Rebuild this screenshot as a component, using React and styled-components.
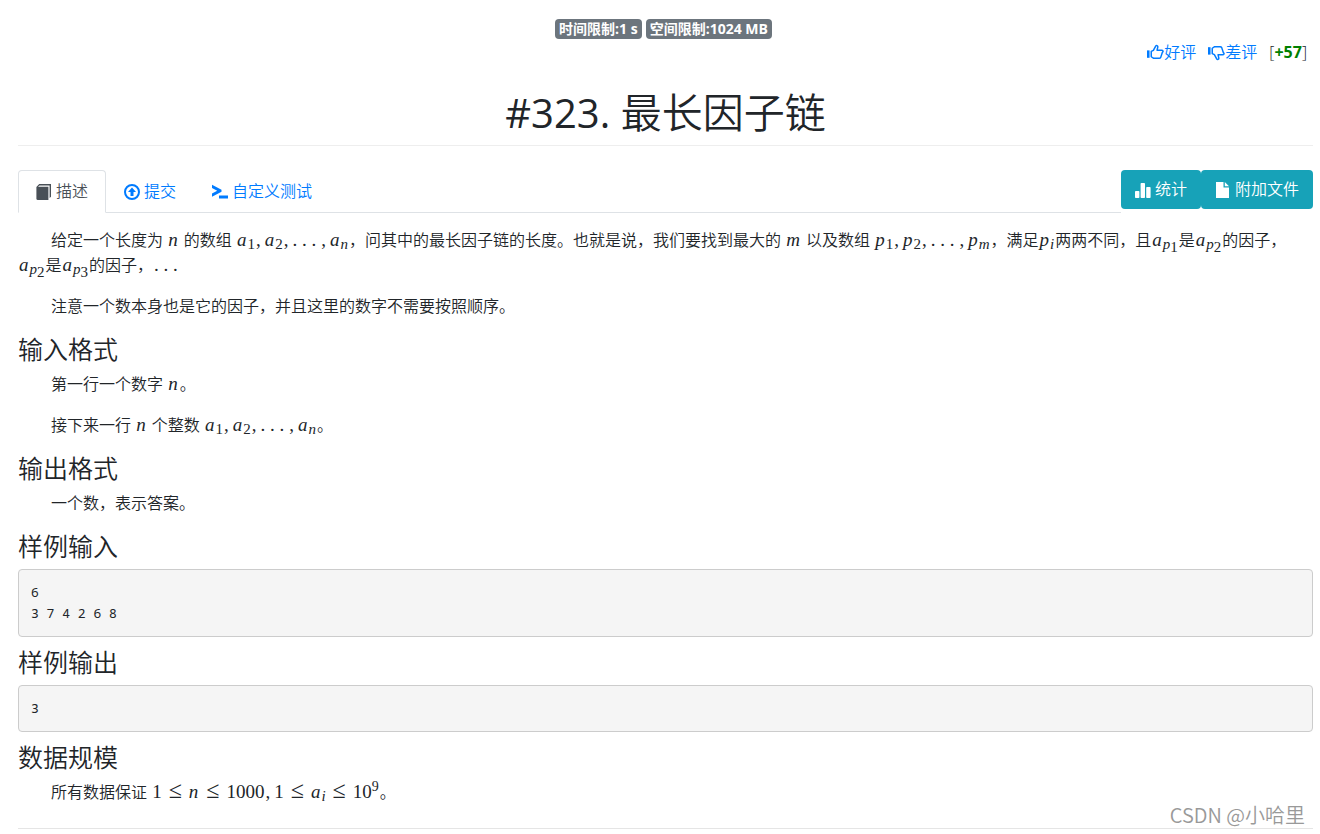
import styled, { createGlobalStyle, css } from "styled-components";

const GlobalStyle = createGlobalStyle`
  *,
  *::before,
  *::after {
    box-sizing: border-box;
  }

  body {
    margin: 0;
    background: #fff;
    color: #212529;
    font-family: "Open Sans", "Noto Sans CJK SC", sans-serif;
    font-size: 16px;
    font-weight: 350;
    line-height: 25px;
  }
`;

const Page = styled.main`
  position: relative;
  padding: 16px 7px 5px 18px;
`;

// Header
const Limits = styled.div`
  display: flex;
  justify-content: center;
  gap: 4px;
  padding: 3px 4px 1px 0;
`;

const Badge = styled.span`
  padding: 0 4px;
  border-radius: 4px;
  background: #6c757d;
  color: #fff;
  font-size: 14px;
  font-weight: 700;
  line-height: 20px;
`;

const Votes = styled.div`
  display: flex;
  justify-content: flex-end;
  align-items: center;
  gap: 12px;
  padding-right: 6px;
`;

const VoteLink = styled.a`
  display: inline-flex;
  align-items: center;
  color: #007bff;
  text-decoration: none;
`;

const Score = styled.strong`
  color: green;
  font-weight: 700;
`;

const Title = styled.h1`
  margin: 20px 0 24px;
  padding-bottom: 5px;
  border-bottom: 1px solid #eee;
  font-size: 41px;
  font-weight: 350;
  line-height: 54px;
  text-align: center;
`;

const ProblemId = styled.span`
  font-size: 40px;
  font-weight: 500;
`;

// Tabs and actions
const Toolbar = styled.div`
  display: flex;
  align-items: flex-start;
  margin-bottom: 15px;
`;

const Tabs = styled.nav`
  display: flex;
  flex: 1;
  height: 43px;
  border-bottom: 1px solid #dee2e6;
`;

const Tab = styled.a`
  display: flex;
  align-items: center;
  gap: 4px;
  height: 43px;
  padding: 0 17px;
  border: 1px solid transparent;
  border-radius: 4px 4px 0 0;
  color: #007bff;
  text-decoration: none;

  ${(props) =>
    props.$active &&
    css`
      border-color: #dee2e6 #dee2e6 #fff;
      background: #fff;
      color: #495057;
    `}
`;

const ActionButton = styled.button`
  display: flex;
  align-items: center;
  gap: 4px;
  height: 39px;
  padding: 0 14px;
  border: 0;
  border-radius: 4px;
  background: #17a2b8;
  color: #fff;
  font: inherit;
  cursor: pointer;
`;

// Problem statement
const Heading = styled.h3`
  margin: 0 0 9px;
  font-size: 25px;
  font-weight: 350;
  line-height: 28px;
`;

const Text = styled.p`
  margin: 0 0 16px;
  text-indent: 33px;
`;

const Sample = styled.pre`
  margin: 0 0 11px;
  padding: 12px;
  border: 1px solid #ccc;
  border-radius: 4px;
  background: #f5f5f5;
  font-family: "Noto Sans Mono", "DejaVu Sans Mono", monospace;
  font-size: 13px;
  font-weight: 400;
  line-height: 21px;
`;

const Divider = styled.hr`
  margin: 23px 0 0;
  border: 0;
  border-top: 1px solid #e5e5e5;
`;

const Watermark = styled.div`
  position: absolute;
  right: 15px;
  bottom: 6px;
  color: #999;
  font-family: "Noto Sans CJK SC", sans-serif;
  font-size: 20px;
  font-weight: 350;
  line-height: 26px;
`;

// Formulas
const Formula = styled.span`
  margin: 0 1px;
  font-family: "Liberation Serif", serif;
  font-size: 19px;
  font-weight: 400;
  line-height: 0;
  text-indent: 0;
  white-space: nowrap;
`;

const Var = styled.i`
  padding-right: 1px;
`;

const Sub = styled.sub`
  font-size: 15px;
  line-height: 0;
  vertical-align: -3px;
`;

const Sup = styled.sup`
  font-size: 14px;
  line-height: 0;
  vertical-align: 7px;
`;

const Rel = styled.span`
  margin: 0 7px;
  font-size: 24px;
`;

const Comma = styled.span`
  margin: 0 4px 0 1px;

  &::before {
    content: ",";
  }
`;

const Dots = styled.span`
  margin-right: 4px;
`;

const NoWrap = styled.span`
  white-space: nowrap;
`;

const Svg = styled.svg`
  flex: none;
  width: ${(props) => props.$size || 16}px;
  height: ${(props) => props.$size || 16}px;
  fill: currentColor;
`;

const ThumbIcon = ({ down }) => (
  <Svg viewBox="0 0 16 16" $size={17}>
    <g transform={down ? "matrix(1 0 0 -1 0 16)" : undefined}>
      <path d="M0 6h2.4v7H0z" />
      <path
        d="M4 12V7l2-1 2.3-4.2c.6-.8 1.9-.3 1.9.8L9.5 5.8h4.2c1.5 0 1.8 1.4.8 2l-1.6 4.8c-.3.6-.8.9-1.4.9H6.3L4 12z"
        fill="none"
        stroke="currentColor"
        strokeWidth="1.4"
        strokeLinejoin="round"
      />
    </g>
  </Svg>
);

const BookIcon = () => (
  <Svg viewBox="0 0 16 16">
    <path d="M3.2 0H15v12.8L13.6 14V1.4H3.6L2 2.8h10.4V16H1.6C.8 16 .4 15.5.4 14.8V3z" />
  </Svg>
);

const SubmitIcon = () => (
  <Svg viewBox="0 0 16 16">
    <circle cx="8" cy="8" r="7" fill="none" stroke="currentColor" strokeWidth="2" />
    <path d="M8 3.4 12 8H9.5v4h-3V8H4z" />
  </Svg>
);

const ConsoleIcon = () => (
  <Svg viewBox="0 0 16 16">
    <path d="M0 .8 9.5 5.8v2L0 12.8V9.6L5.2 6.8 0 4zM7 11.6h9v3H7z" />
  </Svg>
);

const StatsIcon = () => (
  <Svg viewBox="0 0 16 16">
    <rect x="0" y="9" width="4.4" height="7" rx="0.8" />
    <rect x="5.6" y="1" width="4.4" height="15" rx="0.8" />
    <rect x="11.2" y="5" width="4.4" height="11" rx="0.8" />
  </Svg>
);

const FileIcon = () => (
  <Svg viewBox="0 0 16 16">
    <path d="M1 0h7.5v5.5H14V16H1zM9.8 0 14 4.3H9.8z" />
  </Svg>
);

// x₁, x₂, ..., xₙ
const Sequence = ({ name, last }) => (
  <Formula>
    <Var>{name}</Var>
    <Sub>1</Sub>
    <Comma />
    <Var>{name}</Var>
    <Sub>2</Sub>
    <Comma />
    <Dots>. . .</Dots>
    <Comma />
    <Var>{name}</Var>
    <Sub>
      <i>{last}</i>
    </Sub>
  </Formula>
);

const Indexed = ({ index }) => (
  <Formula>
    <Var>a</Var>
    <Sub>
      <i>p</i>
      <Sub>{index}</Sub>
    </Sub>
  </Formula>
);

const N = () => (
  <Formula>
    <Var>n</Var>
  </Formula>
);

export default function App() {
  return (
    <>
      <GlobalStyle />
      <Page>
        <Limits>
          <Badge>时间限制:1 s</Badge>
          <Badge>空间限制:1024 MB</Badge>
        </Limits>
        <Votes>
          <VoteLink href="#up">
            <ThumbIcon />
            好评
          </VoteLink>
          <VoteLink href="#down">
            <ThumbIcon down />
            差评
          </VoteLink>
          <span>
            [<Score>+57</Score>]
          </span>
        </Votes>
        <Title>
          <ProblemId>#323.</ProblemId> 最长因子链
        </Title>

        <Toolbar>
          <Tabs>
            <Tab href="#description" $active>
              <BookIcon />
              描述
            </Tab>
            <Tab href="#submit">
              <SubmitIcon />
              提交
            </Tab>
            <Tab href="#custom-test">
              <ConsoleIcon />
              自定义测试
            </Tab>
          </Tabs>
          <ActionButton type="button">
            <StatsIcon />
            统计
          </ActionButton>
          <ActionButton type="button">
            <FileIcon />
            附加文件
          </ActionButton>
        </Toolbar>

        <Text>
          给定一个长度为 <N /> 的数组 <Sequence name="a" last="n" />
          ，问其中的最长因子链的长度。也就是说，我们要找到最大的{" "}
          <Formula>
            <Var>m</Var>
          </Formula>{" "}
          以及数组 <Sequence name="p" last="m" />
          ，满足
          <Formula>
            <Var>p</Var>
            <Sub>
              <i>i</i>
            </Sub>
          </Formula>
          两两不同，且
          <Indexed index="1" />是<Indexed index="2" />
          的因子，
          <NoWrap>
            <Indexed index="2" />是<Indexed index="3" />
            的因子，<Formula>. . .</Formula>
          </NoWrap>
        </Text>
        <Text>注意一个数本身也是它的因子，并且这里的数字不需要按照顺序。</Text>

        <Heading>输入格式</Heading>
        <Text>
          第一行一个数字 <N />。
        </Text>
        <Text>
          接下来一行 <N /> 个整数 <Sequence name="a" last="n" />。
        </Text>

        <Heading>输出格式</Heading>
        <Text>一个数，表示答案。</Text>

        <Heading>样例输入</Heading>
        <Sample>{"6\n3 7 4 2 6 8"}</Sample>

        <Heading>样例输出</Heading>
        <Sample>3</Sample>

        <Heading>数据规模</Heading>
        <Text>
          所有数据保证{" "}
          <Formula>
            1<Rel>≤</Rel>
            <Var>n</Var>
            <Rel>≤</Rel>1000
            <Comma />1<Rel>≤</Rel>
            <Var>a</Var>
            <Sub>
              <i>i</i>
            </Sub>
            <Rel>≤</Rel>10<Sup>9</Sup>
          </Formula>
          。
        </Text>
        <Divider />
        <Watermark>CSDN @小哈里</Watermark>
      </Page>
    </>
  );
}
